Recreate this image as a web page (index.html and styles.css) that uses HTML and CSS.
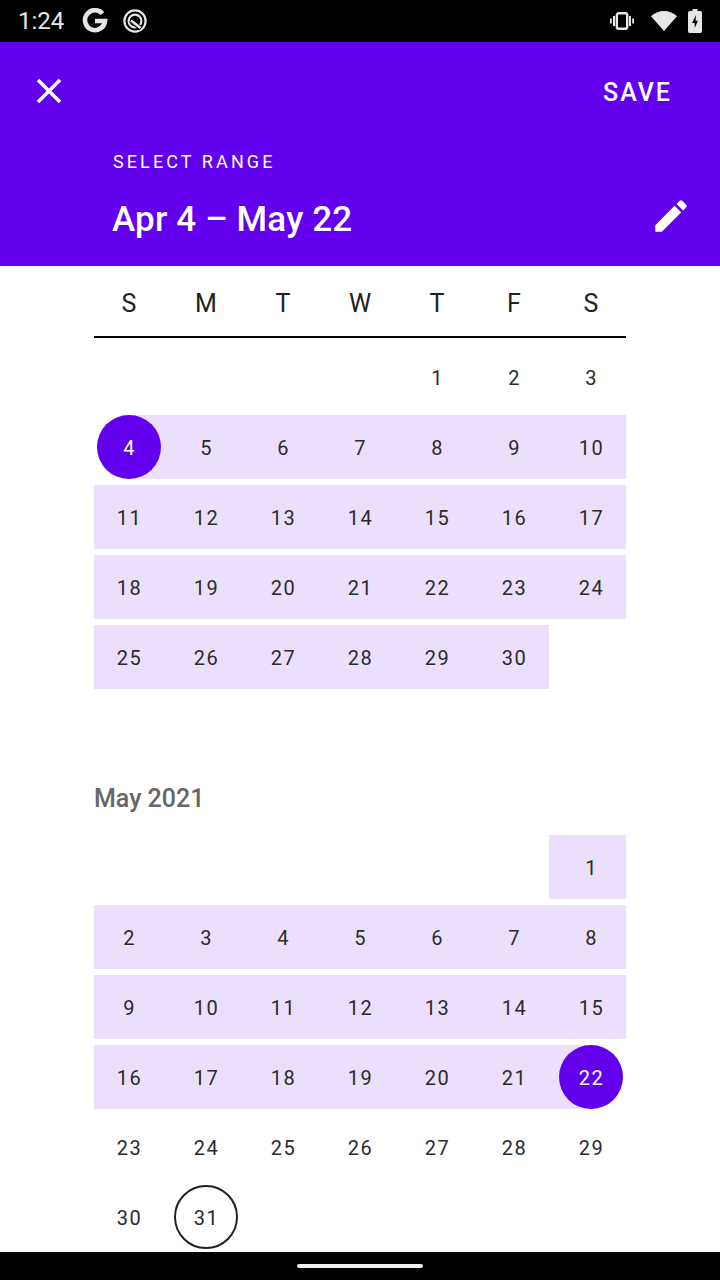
FILE: index.html
```html
<!DOCTYPE html>
<html lang="en">
<head>
<meta charset="utf-8">
<title>Select range</title>
<link rel="stylesheet" href="styles.css">
</head>
<body>
<div class="screen">
  <div class="status">
    <div class="status-left">
      <span class="clock">1:24</span>
      <svg class="ico-g" width="26" height="26" viewBox="0 0 26 26"><path d="M20.6 5.6A10 10 0 1 0 23 13H13" fill="none" stroke="#e6e6e6" stroke-width="4.6"/></svg>
      <svg class="ico-q" width="26" height="26" viewBox="0 0 26 26"><circle cx="13" cy="13" r="10.6" fill="none" stroke="#e6e6e6" stroke-width="2.2"/><circle cx="13" cy="13" r="6.4" fill="none" stroke="#e6e6e6" stroke-width="2.2"/><path d="M8.5 12.2l10.5 8.3" fill="none" stroke="#000" stroke-width="4.5"/><path d="M9 12.4l9.6 7.6" fill="none" stroke="#e6e6e6" stroke-width="2.6"/></svg>
    </div>
    <div class="status-right">
      <svg class="ico-vibrate" width="24" height="18" viewBox="0 0 24 18"><rect x="6.8" y="1.200" width="10.400" height="15.600" rx="2" fill="none" stroke="#e6e6e6" stroke-width="2.400"/><path d="M3 4h2v10H3zM19 4h2v10h-2zM0 6.500h1.800v5H0zM22.200 6.500H24v5h-1.800z" fill="#e6e6e6"/></svg>
      <svg class="ico-wifi" width="26" height="20" viewBox="0 0 26 20"><path d="M13 20L0 5.300C3.500 2 8 0 13 0s9.500 2 13 5.300z" fill="#e6e6e6"/></svg>
      <svg class="ico-battery" width="14" height="24" viewBox="0 0 14 24"><path d="M4.500 0h5v2h2.800A1.700 1.700 0 0 1 14 3.700v18.600a1.700 1.700 0 0 1-1.700 1.700H1.700A1.700 1.700 0 0 1 0 22.300V3.700A1.700 1.700 0 0 1 1.700 2h2.800z" fill="#e6e6e6"/><path d="M8 6L4 14h2.700v5L10 11.800H7.500z" fill="#000"/></svg>
    </div>
  </div>

  <header class="header">
    <div class="toolbar">
      <svg class="ico-close" width="42" height="42" viewBox="0 0 24 24"><path d="M19 6.410L17.590 5 12 10.590 6.410 5 5 6.410 10.590 12 5 17.590 6.410 19 12 13.410 17.590 19 19 17.590 13.410 12z" fill="#fff"/></svg>
      <span class="save">SAVE</span>
    </div>
    <div class="overline">SELECT RANGE</div>
    <div class="date-row">
      <span class="date">Apr 4 – May 22</span>
      <svg class="ico-edit" width="42" height="42" viewBox="0 0 24 24"><path d="M3 17.250V21h3.750L17.810 9.940l-3.750-3.750L3 17.250zM20.710 7.040c.39-.39.39-1.020 0-1.410l-2.340-2.340c-.39-.39-1.020-.39-1.410 0l-1.830 1.830 3.750 3.750 1.830-1.830z" fill="#fff"/></svg>
    </div>
  </header>

  <main class="calendar">
    <div class="weekdays">
      <div class="grid">
        <span>S</span><span>M</span><span>T</span><span>W</span><span>T</span><span>F</span><span>S</span>
      </div>
    </div>

    <section class="month">
      <div class="week"><div class="grid">
        <div class="day"></div><div class="day"></div><div class="day"></div><div class="day"></div>
        <div class="day"><span class="num">1</span></div><div class="day"><span class="num">2</span></div><div class="day"><span class="num">3</span></div>
      </div></div>
      <div class="week band-from-first"><div class="grid">
        <div class="day"><span class="num selected">4</span></div><div class="day"><span class="num">5</span></div><div class="day"><span class="num">6</span></div><div class="day"><span class="num">7</span></div><div class="day"><span class="num">8</span></div><div class="day"><span class="num">9</span></div><div class="day"><span class="num">10</span></div>
      </div></div>
      <div class="week band-full"><div class="grid">
        <div class="day"><span class="num">11</span></div><div class="day"><span class="num">12</span></div><div class="day"><span class="num">13</span></div><div class="day"><span class="num">14</span></div><div class="day"><span class="num">15</span></div><div class="day"><span class="num">16</span></div><div class="day"><span class="num">17</span></div>
      </div></div>
      <div class="week band-full"><div class="grid">
        <div class="day"><span class="num">18</span></div><div class="day"><span class="num">19</span></div><div class="day"><span class="num">20</span></div><div class="day"><span class="num">21</span></div><div class="day"><span class="num">22</span></div><div class="day"><span class="num">23</span></div><div class="day"><span class="num">24</span></div>
      </div></div>
      <div class="week band-to-fri"><div class="grid">
        <div class="day"><span class="num">25</span></div><div class="day"><span class="num">26</span></div><div class="day"><span class="num">27</span></div><div class="day"><span class="num">28</span></div><div class="day"><span class="num">29</span></div><div class="day"><span class="num">30</span></div><div class="day"></div>
      </div></div>
    </section>

    <section class="month">
      <h2 class="month-title">May 2021</h2>
      <div class="week band-sat-only"><div class="grid">
        <div class="day"></div><div class="day"></div><div class="day"></div><div class="day"></div><div class="day"></div><div class="day"></div>
        <div class="day"><span class="num">1</span></div>
      </div></div>
      <div class="week band-full"><div class="grid">
        <div class="day"><span class="num">2</span></div><div class="day"><span class="num">3</span></div><div class="day"><span class="num">4</span></div><div class="day"><span class="num">5</span></div><div class="day"><span class="num">6</span></div><div class="day"><span class="num">7</span></div><div class="day"><span class="num">8</span></div>
      </div></div>
      <div class="week band-full"><div class="grid">
        <div class="day"><span class="num">9</span></div><div class="day"><span class="num">10</span></div><div class="day"><span class="num">11</span></div><div class="day"><span class="num">12</span></div><div class="day"><span class="num">13</span></div><div class="day"><span class="num">14</span></div><div class="day"><span class="num">15</span></div>
      </div></div>
      <div class="week band-to-last"><div class="grid">
        <div class="day"><span class="num">16</span></div><div class="day"><span class="num">17</span></div><div class="day"><span class="num">18</span></div><div class="day"><span class="num">19</span></div><div class="day"><span class="num">20</span></div><div class="day"><span class="num">21</span></div><div class="day"><span class="num selected">22</span></div>
      </div></div>
      <div class="week"><div class="grid">
        <div class="day"><span class="num">23</span></div><div class="day"><span class="num">24</span></div><div class="day"><span class="num">25</span></div><div class="day"><span class="num">26</span></div><div class="day"><span class="num">27</span></div><div class="day"><span class="num">28</span></div><div class="day"><span class="num">29</span></div>
      </div></div>
      <div class="week"><div class="grid">
        <div class="day"><span class="num">30</span></div><div class="day"><span class="num today">31</span></div><div class="day"></div><div class="day"></div><div class="day"></div><div class="day"></div><div class="day"></div>
      </div></div>
    </section>
  </main>

  <div class="navbar"><span class="pill"></span></div>
</div>
</body>
</html>
```

FILE: styles.css
```css
* { box-sizing: border-box; }
html, body { margin: 0; padding: 0; background: #fff; }
body { font-family: Roboto, "Noto Sans", sans-serif; }

.screen { width: 720px; height: 1280px; display: flex; flex-direction: column; overflow: hidden; }

.status { flex: none; height: 42px; background: #000; display: flex; align-items: center; justify-content: space-between; padding: 0 18px; }
.status-left { display: flex; align-items: center; }
.clock { color: #e6e6e6; font-size: 24px; font-weight: 400; width: 64px; }
.ico-q { margin-left: 14px; }
.status-right { display: flex; align-items: center; }
.ico-wifi { margin-left: 17px; }
.ico-battery { margin-left: 11px; }

.header { flex: none; height: 224px; background: #6200ee; color: #fff; display: flex; flex-direction: column; }
.toolbar { height: 98px; display: flex; align-items: center; justify-content: space-between; padding: 3px 48px 0 28px; }
.ico-close { margin-top: -3px; }
.save { font-size: 25px; font-weight: 500; letter-spacing: 2px; }
.overline { margin: 10px 0 0 113px; height: 24px; line-height: 24px; font-size: 18px; letter-spacing: 3.1px; }
.date-row { height: 60px; margin-top: 15px; display: flex; align-items: center; justify-content: space-between; padding: 0 28px 0 112px; }
.date { font-size: 35px; font-weight: 500; letter-spacing: .15px; }
.ico-edit { margin-top: -6px; }

.calendar { flex: 1; min-height: 0; overflow: hidden; padding: 0 94px; }
.grid { display: grid; grid-template-columns: repeat(7, 77px); margin: 0 -3.5px; }

.weekdays { height: 72px; border-bottom: 2px solid #000; padding-top: 4px; margin-bottom: 7px; }
.weekdays .grid { height: 66px; align-items: center; text-align: center; font-size: 25px; color: #212121; }

.week { height: 64px; margin-bottom: 6px; }
.day { height: 64px; display: flex; align-items: center; justify-content: center; }
.num { width: 64px; height: 64px; padding: 2px 0 0 1px; border-radius: 50%; display: flex; align-items: center; justify-content: center; font-size: 20px; letter-spacing: 1.4px; color: #2b2b2b; }
.selected { background: #6200ee; color: #fff; }
.today { border: 2px solid #212121; }

.band-full { background: #ecdffc; }
.band-from-first { background: linear-gradient(to right, transparent 35px, #ecdffc 35px); }
.band-to-fri { background: linear-gradient(to right, #ecdffc 455px, transparent 455px); }
.band-sat-only { background: linear-gradient(to right, transparent 455px, #ecdffc 455px); }
.band-to-last { background: linear-gradient(to right, #ecdffc 497px, transparent 497px); }

.month-title { margin: 90px 0 16px; height: 40px; line-height: 40px; font-size: 25px; font-weight: 500; color: #666; }

.navbar { flex: none; height: 28px; background: #000; display: flex; align-items: center; justify-content: center; }
.pill { width: 126px; height: 4px; border-radius: 2px; background: #f0f0f0; }
```
